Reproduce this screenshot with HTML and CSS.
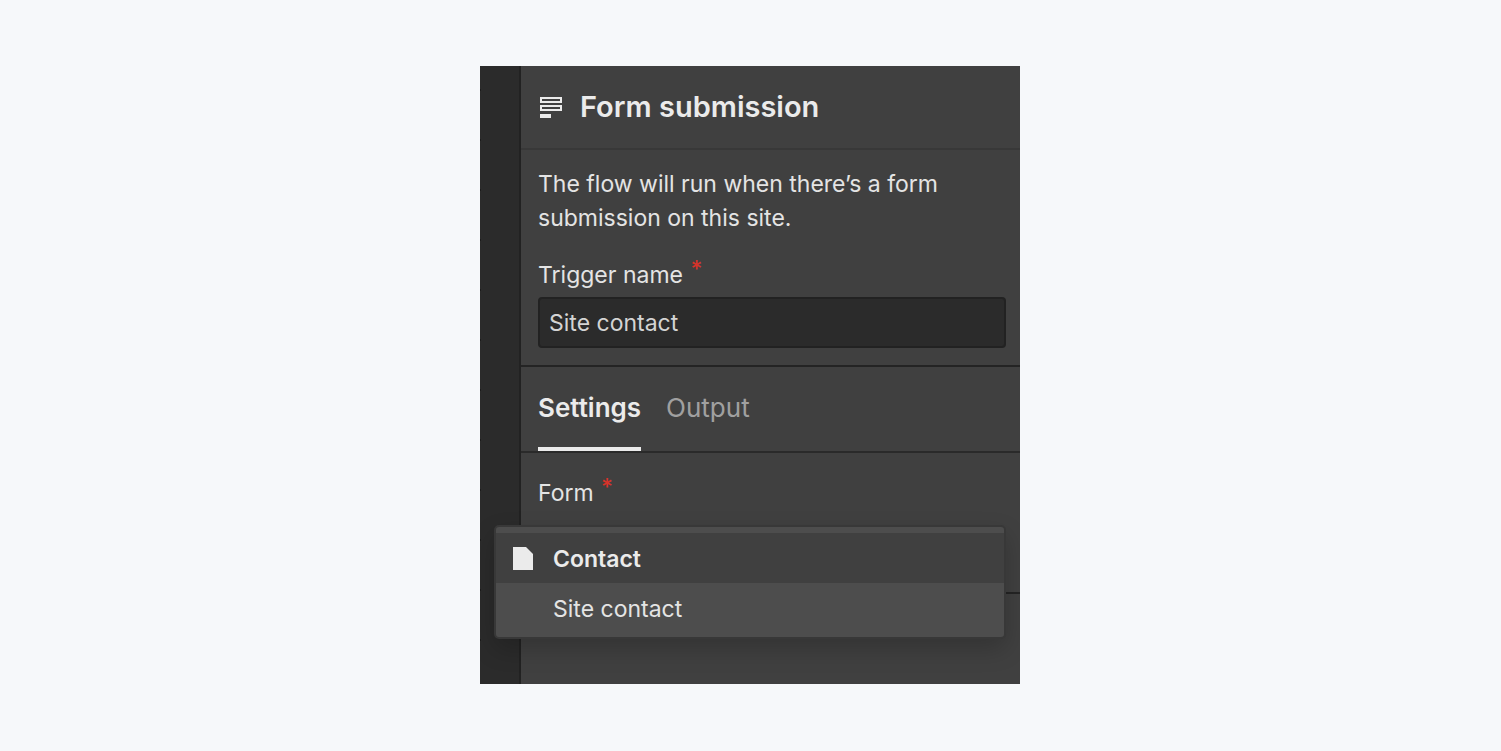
FILE: index.html
```html
<!DOCTYPE html>
<html lang="en">
<head>
    <meta charset="UTF-8">
    <meta name="viewport" content="width=device-width, initial-scale=1.0">
    <title>Form submission</title>
    <link rel="stylesheet" href="styles.css">
</head>
<body>
    <main class="editor">
        <div class="canvas"></div>
        <section class="panel">
            <header class="panel-header">
                <svg class="panel-icon" width="23" height="22" viewBox="0 0 23 22" aria-hidden="true">
                    <path fill="none" stroke="#ebebeb" stroke-width="2" d="M2 2h20v4H2zM2 10h20v4H2z"/>
                    <path fill="#ebebeb" d="M1 18h11v4H1z"/>
                </svg>
                <h1>Form submission</h1>
            </header>

            <div class="trigger">
                <p class="description">The flow will run when there’s a form submission on this site.</p>
                <label class="label" for="triggerName">Trigger name <span class="required">*</span></label>
                <input class="input" id="triggerName" type="text" value="Site contact">
            </div>

            <div class="tabs" role="tablist">
                <button class="tab active" role="tab" aria-selected="true">Settings</button>
                <button class="tab" role="tab" aria-selected="false">Output</button>
            </div>

            <div class="settings">
                <span class="label" id="formLabel">Form <span class="required">*</span></span>
                <div class="menu" role="listbox" aria-labelledby="formLabel">
                    <button class="option selected" role="option" aria-selected="true">
                        <svg width="20" height="23" viewBox="0 0 20 23" aria-hidden="true">
                            <path fill="#ebebeb" d="M0 0h13l7 7v16H0z"/>
                        </svg>
                        Contact
                    </button>
                    <button class="option" role="option" aria-selected="false">Site contact</button>
                </div>
            </div>
        </section>
    </main>
</body>
</html>
```

FILE: styles.css
```css
* {
    box-sizing: border-box;
}
body {
    margin: 0;
    min-height: 100vh;
    padding: 0 1px 1px 0;
    display: flex;
    align-items: center;
    justify-content: center;
    background-color: #f6f8fa;
    color: #e4e4e4;
    font-family: Inter, sans-serif;
    font-size: 23px;
    line-height: 34px;
}
button,
input {
    font: inherit;
    color: inherit;
}
.editor {
    display: flex;
    width: 100%;
    max-width: 540px;
    background-color: #404040;
    overflow: hidden;
}
/* dotted grid of the flow canvas */
.canvas {
    width: 41px;
    background-color: #2b2b2b;
    background-image: radial-gradient(circle at 0 24px, #1c1c1c 1px, transparent 1px);
    background-size: 50px 50px;
    background-repeat: repeat-y;
    border-right: 2px solid #222;
}
.panel {
    flex: 1;
    padding-bottom: 90px;
}
.panel-header {
    display: flex;
    align-items: center;
    gap: 18px;
    padding: 20px 18px 21px;
    border-bottom: 2px solid #383838;
}
.panel-header h1 {
    margin: 0;
    font-size: 29px;
    font-weight: 600;
    line-height: 41px;
    color: #ebebeb;
}
.trigger {
    padding: 17px 14px 17px 17px;
    border-bottom: 2px solid #242424;
}
.description {
    margin: 0 0 23px;
}
.label {
    display: block;
}
.required {
    display: inline-block;
    margin-left: 1px;
    color: #d6332a;
    font-size: 23px;
    font-weight: 500;
    line-height: 20px;
    vertical-align: 6px;
}
.input {
    display: block;
    width: 100%;
    height: 51px;
    margin-top: 5px;
    padding: 1px 9px 0;
    background-color: #2b2b2b;
    border: 2px solid #222;
    border-radius: 4px;
    color: #d4d4d4;
}
.tabs {
    display: flex;
    gap: 25px;
    padding: 0 17px;
    border-bottom: 2px solid #2a2a2a;
}
.tab {
    height: 84px;
    padding: 2px 0 0;
    background: none;
    border: none;
    border-bottom: 4px solid transparent;
    font-size: 26px;
    color: #a0a0a0;
    cursor: pointer;
}
.tab.active {
    border-bottom-color: #ebebeb;
    color: #ebebeb;
    font-weight: 600;
}
.settings {
    position: relative;
    min-height: 141px;
    padding: 23px 17px;
    border-bottom: 2px solid #242424;
}
/* open dropdown, hangs over the canvas edge */
.menu {
    position: absolute;
    top: 72px;
    left: -27px;
    right: 14px;
    padding: 6px 0 4px;
    background-color: #4d4d4d;
    border: 2px solid #383838;
    border-radius: 5px;
    box-shadow: 0 10px 24px rgba(0, 0, 0, 0.2);
}
.option {
    display: flex;
    align-items: center;
    gap: 20px;
    width: 100%;
    height: 50px;
    padding: 1px 17px 0 57px;
    background: none;
    border: none;
    cursor: pointer;
}
.option.selected {
    padding-left: 17px;
    background-color: #404040;
    color: #ebebeb;
    font-weight: 600;
}
```
